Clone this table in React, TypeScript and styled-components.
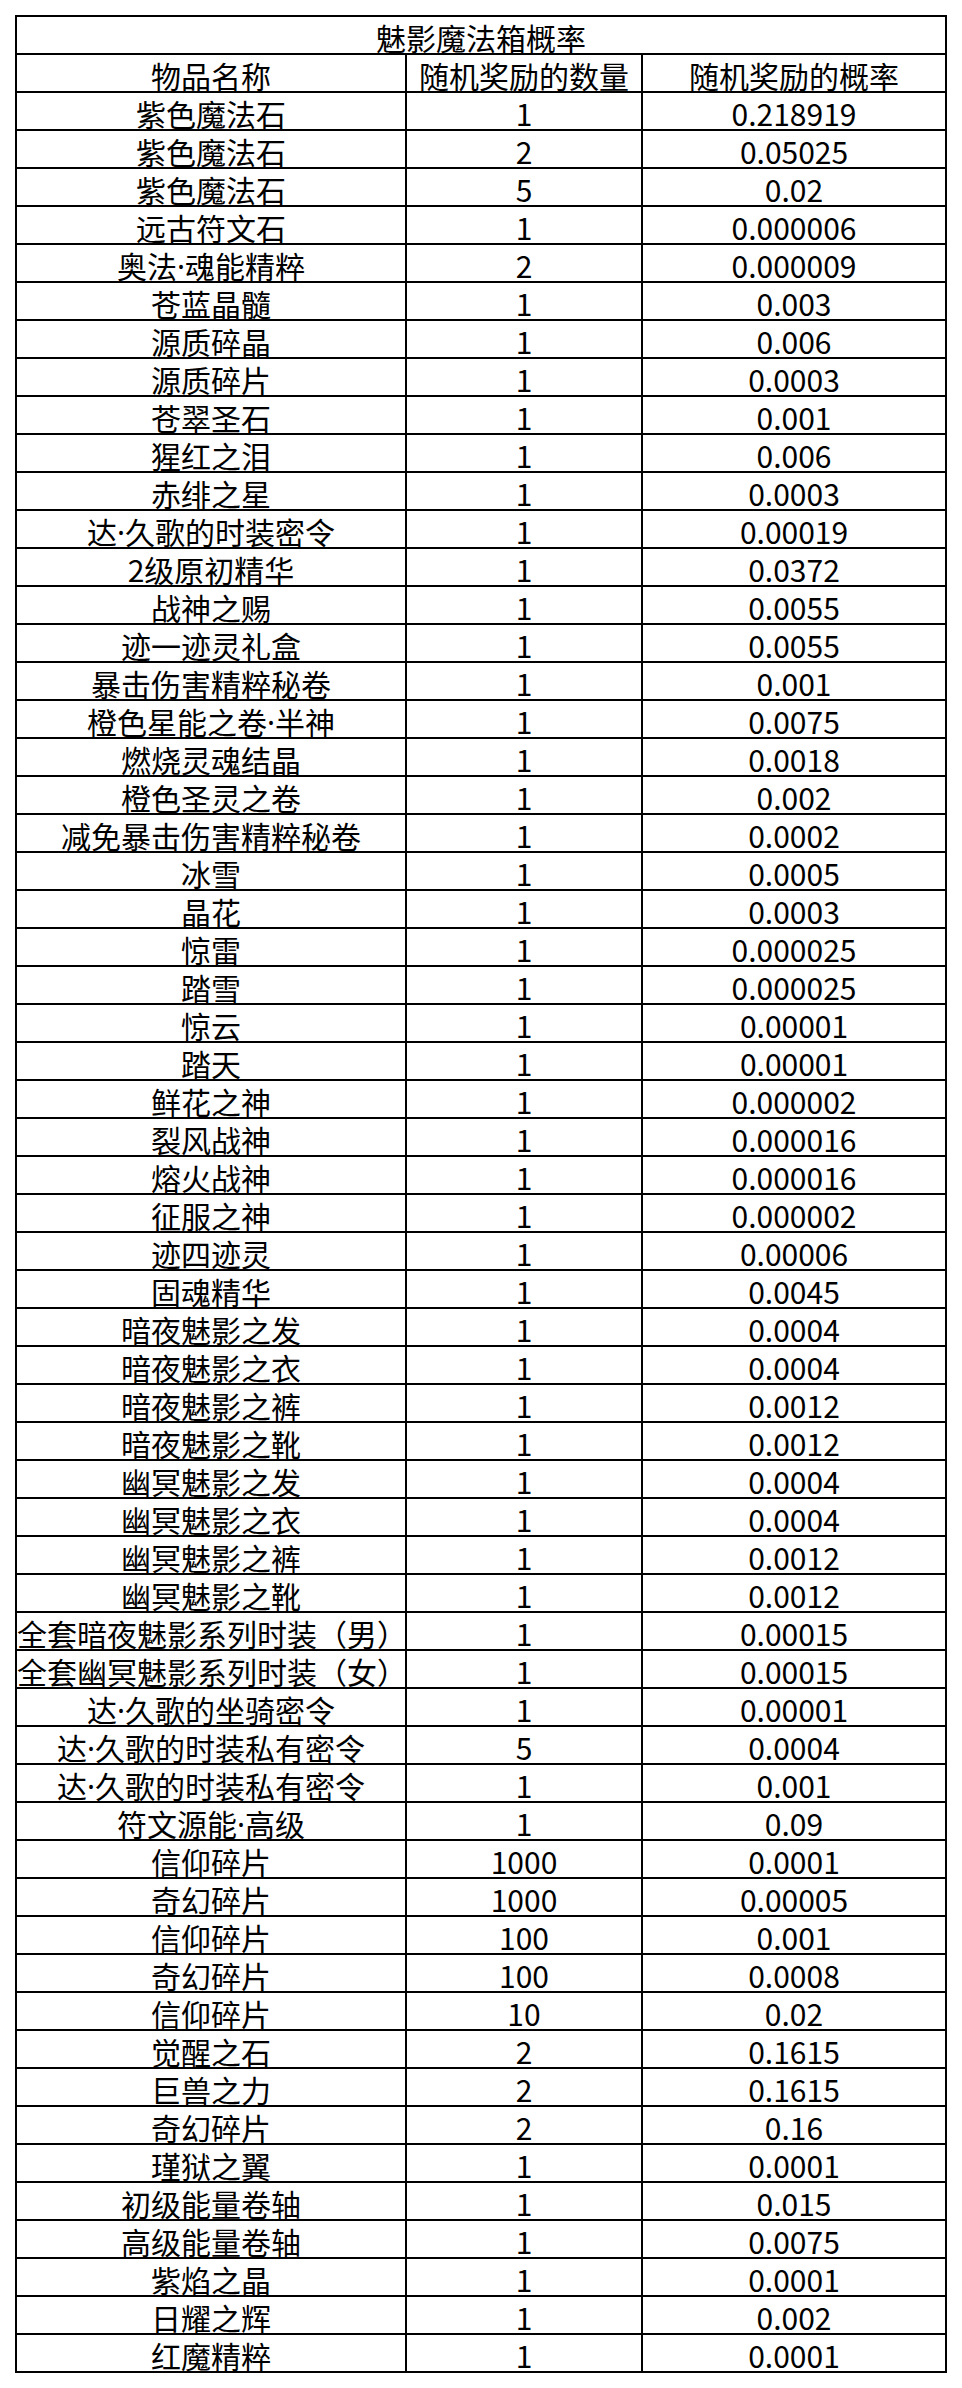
import styled, { createGlobalStyle } from 'styled-components';

const GlobalStyle = createGlobalStyle`
  html, body {
    margin: 0;
    padding: 0;
    background: #fff;
  }
  body {
    font-family: "Noto Sans CJK SC", "Noto Sans", sans-serif;
    color: #000;
  }
`;

const Page = styled.div`
  padding: 15px;
`;

const Table = styled.table`
  border-collapse: separate;
  border-spacing: 0;
  border-top: 2px solid #000;
  border-left: 2px solid #000;
  table-layout: fixed;
  width: 932px;
`;

const Cell = styled.td`
  box-sizing: border-box;
  height: 38px;
  padding: 5px 0 0;
  border-right: 2px solid #000;
  border-bottom: 2px solid #000;
  font-size: 30px;
  line-height: 31px;
  text-align: center;
  vertical-align: top;
  white-space: nowrap;
`;

const HeadCell = styled(Cell).attrs({ as: 'th' })`
  font-weight: 400;
`;

// narrow latin middle dot, as in the reference (CJK fonts draw it full width)
const Dot = styled.span`
  font-family: "Noto Sans", "DejaVu Sans", sans-serif;
  line-height: 0;
`;

const rows: [string, string, string][] = [
  ['紫色魔法石', '1', '0.218919'],
  ['紫色魔法石', '2', '0.05025'],
  ['紫色魔法石', '5', '0.02'],
  ['远古符文石', '1', '0.000006'],
  ['奥法·魂能精粹', '2', '0.000009'],
  ['苍蓝晶髓', '1', '0.003'],
  ['源质碎晶', '1', '0.006'],
  ['源质碎片', '1', '0.0003'],
  ['苍翠圣石', '1', '0.001'],
  ['猩红之泪', '1', '0.006'],
  ['赤绯之星', '1', '0.0003'],
  ['达·久歌的时装密令', '1', '0.00019'],
  ['2级原初精华', '1', '0.0372'],
  ['战神之赐', '1', '0.0055'],
  ['迹一迹灵礼盒', '1', '0.0055'],
  ['暴击伤害精粹秘卷', '1', '0.001'],
  ['橙色星能之卷·半神', '1', '0.0075'],
  ['燃烧灵魂结晶', '1', '0.0018'],
  ['橙色圣灵之卷', '1', '0.002'],
  ['减免暴击伤害精粹秘卷', '1', '0.0002'],
  ['冰雪', '1', '0.0005'],
  ['晶花', '1', '0.0003'],
  ['惊雷', '1', '0.000025'],
  ['踏雪', '1', '0.000025'],
  ['惊云', '1', '0.00001'],
  ['踏天', '1', '0.00001'],
  ['鲜花之神', '1', '0.000002'],
  ['裂风战神', '1', '0.000016'],
  ['熔火战神', '1', '0.000016'],
  ['征服之神', '1', '0.000002'],
  ['迹四迹灵', '1', '0.00006'],
  ['固魂精华', '1', '0.0045'],
  ['暗夜魅影之发', '1', '0.0004'],
  ['暗夜魅影之衣', '1', '0.0004'],
  ['暗夜魅影之裤', '1', '0.0012'],
  ['暗夜魅影之靴', '1', '0.0012'],
  ['幽冥魅影之发', '1', '0.0004'],
  ['幽冥魅影之衣', '1', '0.0004'],
  ['幽冥魅影之裤', '1', '0.0012'],
  ['幽冥魅影之靴', '1', '0.0012'],
  ['全套暗夜魅影系列时装（男）', '1', '0.00015'],
  ['全套幽冥魅影系列时装（女）', '1', '0.00015'],
  ['达·久歌的坐骑密令', '1', '0.00001'],
  ['达·久歌的时装私有密令', '5', '0.0004'],
  ['达·久歌的时装私有密令', '1', '0.001'],
  ['符文源能·高级', '1', '0.09'],
  ['信仰碎片', '1000', '0.0001'],
  ['奇幻碎片', '1000', '0.00005'],
  ['信仰碎片', '100', '0.001'],
  ['奇幻碎片', '100', '0.0008'],
  ['信仰碎片', '10', '0.02'],
  ['觉醒之石', '2', '0.1615'],
  ['巨兽之力', '2', '0.1615'],
  ['奇幻碎片', '2', '0.16'],
  ['瑾狱之翼', '1', '0.0001'],
  ['初级能量卷轴', '1', '0.015'],
  ['高级能量卷轴', '1', '0.0075'],
  ['紫焰之晶', '1', '0.0001'],
  ['日耀之辉', '1', '0.002'],
  ['红魔精粹', '1', '0.0001'],
];

function ItemName({ text }: { text: string }) {
  const parts = text.split('·');
  return (
    <>
      {parts.map((p, i) => (
        <span key={i}>
          {i > 0 && <Dot>·</Dot>}
          {p}
        </span>
      ))}
    </>
  );
}

export default function App() {
  return (
    <Page>
      <GlobalStyle />
      <Table>
        <colgroup>
          <col style={{ width: 390 }} />
          <col style={{ width: 236 }} />
          <col style={{ width: 304 }} />
        </colgroup>
        <thead>
          <tr>
            <HeadCell colSpan={3}>魅影魔法箱概率</HeadCell>
          </tr>
          <tr>
            <HeadCell>物品名称</HeadCell>
            <HeadCell>随机奖励的数量</HeadCell>
            <HeadCell>随机奖励的概率</HeadCell>
          </tr>
        </thead>
        <tbody>
          {rows.map(([name, count, rate], i) => (
            <tr key={i}>
              <Cell>
                <ItemName text={name} />
              </Cell>
              <Cell>{count}</Cell>
              <Cell>{rate}</Cell>
            </tr>
          ))}
        </tbody>
      </Table>
    </Page>
  );
}
